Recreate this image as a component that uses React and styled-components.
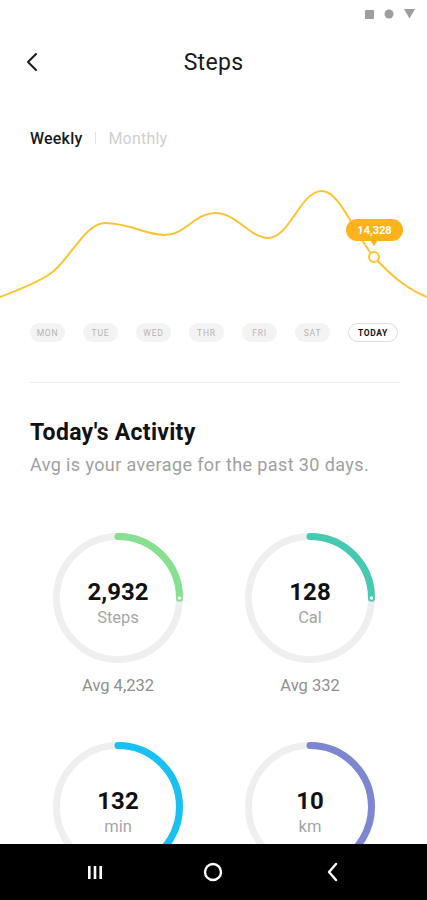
import React from 'react'
import styled, { createGlobalStyle } from 'styled-components'

const GlobalStyle = createGlobalStyle`
  * { box-sizing: border-box; }
  body {
    margin: 0;
    background: #fff;
    font-family: Roboto, 'Noto Sans', sans-serif;
  }
`

const Screen = styled.div`
  position: relative;
  width: 427px;
  height: 900px;
  overflow: hidden;
  background: #fff;
`

const StatusBar = styled.div`
  height: 28px;
  display: flex;
  justify-content: flex-end;
  align-items: center;
  gap: 10px;
  padding-right: 12px;
`

const Header = styled.div`
  height: 68px;
  display: grid;
  grid-template-columns: 60px 1fr 60px;
  align-items: center;
`

const BackButton = styled.div`
  padding-left: 26px;
  display: flex;
  align-items: center;
`

const Title = styled.h1`
  margin: 0;
  text-align: center;
  font-size: 23px;
  font-weight: 400;
  color: #1a1a1a;
  letter-spacing: 0.3px;
`

const Tabs = styled.div`
  margin-top: 32px;
  padding-left: 30px;
  display: flex;
  align-items: center;
  height: 20px;
  font-size: 16px;
`

const Tab = styled.span`
  color: ${p => (p.$active ? '#1a1a1a' : '#cfcfcf')};
  font-weight: ${p => (p.$active ? 500 : 400)};
  letter-spacing: 0.2px;
`

const TabDivider = styled.span`
  width: 1px;
  height: 12px;
  background: #e4e4e4;
  margin: 0 12px 0 13px;
`

const ChartArea = styled.div`
  position: relative;
  margin-top: 12px;
  height: 150px;
`

const Tooltip = styled.div`
  position: absolute;
  left: 346px;
  top: 59px;
  width: 57px;
  height: 22px;
  border-radius: 11px;
  background: #ffb21c;
  color: #fff;
  font-size: 11px;
  font-weight: 700;
  display: flex;
  align-items: center;
  justify-content: center;

  &::after {
    content: '';
    position: absolute;
    left: 24px;
    bottom: -5px;
    border-left: 4px solid transparent;
    border-right: 4px solid transparent;
    border-top: 6px solid #ffb21c;
  }
`

const Days = styled.div`
  margin-top: 13px;
  padding-left: 30px;
  display: flex;
  gap: 18px;
`

const Day = styled.div`
  width: ${p => (p.$today ? '50px' : '35px')};
  height: 19px;
  border-radius: 10px;
  background: ${p => (p.$today ? '#fff' : '#f3f3f3')};
  border: ${p => (p.$today ? '1px solid #dcdcdc' : 'none')};
  color: ${p => (p.$today ? '#111' : '#b3b3b3')};
  font-size: 8.5px;
  font-weight: ${p => (p.$today ? 700 : 400)};
  letter-spacing: ${p => (p.$today ? '0.6px' : '0.8px')};
  display: flex;
  align-items: center;
  justify-content: center;
`

const Divider = styled.div`
  margin: 40px 27px 0 30px;
  height: 1px;
  background: #ececec;
`

const SectionTitle = styled.h2`
  margin: 36px 0 0 30px;
  font-size: 23px;
  line-height: 28px;
  font-weight: 700;
  color: #111;
  letter-spacing: 0.3px;
`

const SectionNote = styled.p`
  margin: 8px 0 0 30px;
  font-size: 18px;
  line-height: 20px;
  color: #a0a0a0;
  letter-spacing: 0.4px;
  white-space: nowrap;
`

const RingGrid = styled.div`
  margin-top: 58px;
  padding-left: 22px;
  display: grid;
  grid-template-columns: 192px 192px;
  row-gap: 46px;
`

const RingCell = styled.div`
  display: flex;
  flex-direction: column;
  align-items: center;
`

const RingBox = styled.div`
  display: grid;
  width: 130px;
  height: 130px;

  & > * {
    grid-area: 1 / 1;
  }
`

const RingText = styled.div`
  display: flex;
  flex-direction: column;
  align-items: center;
  justify-content: center;
  padding-top: 11px;
`

const RingValue = styled.div`
  font-size: 24px;
  line-height: 28px;
  font-weight: 700;
  color: #111;
`

const RingLabel = styled.div`
  font-size: 16.5px;
  line-height: 24px;
  color: #a6a6a6;
`

const RingAvg = styled.div`
  margin-top: 13px;
  font-size: 16.5px;
  line-height: 20px;
  color: #8f8f8f;
`

const NavBar = styled.div`
  position: absolute;
  left: 0;
  right: 0;
  bottom: 0;
  height: 56px;
  background: #000;
  display: grid;
  grid-template-columns: 1fr 1fr 1fr;
  align-items: center;
  justify-items: center;
  padding: 0 36px;
`

const CHART_PATH =
  'M0 137 C20 129 35 124 50 114 C70 100 85 63 105 63 C130 63 145 75 165 75 C185 75 195 53 215 53 C237 53 250 78 268 78 C290 78 300 31 322 31 C340 31 355 75 374 97 C395 120 410 130 427 137'

const days = ['MON', 'TUE', 'WED', 'THR', 'FRI', 'SAT']

const rings = [
  { value: '2,932', label: 'Steps', avg: 'Avg 4,232', color: '#86e08f', pct: 0.25, dot: true },
  { value: '128', label: 'Cal', avg: 'Avg 332', color: '#45c9b1', pct: 0.25, dot: true },
  { value: '132', label: 'min', avg: '', color: '#18c1f2', pct: 0.42 },
  { value: '10', label: 'km', avg: '', color: '#7c86d1', pct: 0.42 },
]

const Ring = ({ color, pct, dot }) => {
  const r = 61.5
  const c = 2 * Math.PI * r
  const angle = -Math.PI / 2 + pct * 2 * Math.PI
  const dx = 65 + r * Math.cos(angle)
  const dy = 65 + r * Math.sin(angle)
  return (
    <svg width="130" height="130" viewBox="0 0 130 130">
      <circle cx="65" cy="65" r={r} fill="none" stroke="#efefef" strokeWidth="7" />
      <circle
        cx="65"
        cy="65"
        r={r}
        fill="none"
        stroke={color}
        strokeWidth="7"
        strokeLinecap="round"
        strokeDasharray={`${c * pct} ${c}`}
        transform="rotate(-90 65 65)"
      />
      {dot && <circle cx={dx} cy={dy} r="1.8" fill="#fff" />}
    </svg>
  )
}

export default function App() {
  return (
    <Screen>
      <GlobalStyle />
      <StatusBar>
        <svg width="9" height="9" viewBox="0 0 9 9"><rect width="9" height="9" rx="1" fill="#9e9e9e" /></svg>
        <svg width="10" height="10" viewBox="0 0 10 10"><circle cx="5" cy="5" r="4.5" fill="#9e9e9e" /></svg>
        <svg width="11" height="10" viewBox="0 0 11 10"><path d="M0 0 H11 L5.5 9.5 Z" fill="#9e9e9e" /></svg>
      </StatusBar>

      <Header>
        <BackButton>
          <svg width="12" height="20" viewBox="0 0 12 20">
            <polyline points="10,2 2,10 10,18" fill="none" stroke="#1a1a1a" strokeWidth="2" strokeLinecap="round" strokeLinejoin="round" />
          </svg>
        </BackButton>
        <Title>Steps</Title>
        <span />
      </Header>

      <Tabs>
        <Tab $active>Weekly</Tab>
        <TabDivider />
        <Tab>Monthly</Tab>
      </Tabs>

      <ChartArea>
        <svg width="427" height="150" viewBox="0 0 427 150">
          <path d={CHART_PATH} fill="none" stroke="#fbc531" strokeWidth="2" />
          <circle cx="374" cy="97" r="5" fill="#fff" stroke="#fbc531" strokeWidth="2" />
        </svg>
        <Tooltip>14,328</Tooltip>
      </ChartArea>

      <Days>
        {days.map(d => <Day key={d}>{d}</Day>)}
        <Day $today>TODAY</Day>
      </Days>

      <Divider />

      <SectionTitle>Today's Activity</SectionTitle>
      <SectionNote>Avg is your average for the past 30 days.</SectionNote>

      <RingGrid>
        {rings.map(r => (
          <RingCell key={r.label}>
            <RingBox>
              <Ring color={r.color} pct={r.pct} dot={r.dot} />
              <RingText>
                <RingValue>{r.value}</RingValue>
                <RingLabel>{r.label}</RingLabel>
              </RingText>
            </RingBox>
            {r.avg && <RingAvg>{r.avg}</RingAvg>}
          </RingCell>
        ))}
      </RingGrid>

      <NavBar>
        <svg width="14" height="13" viewBox="0 0 14 13">
          <rect x="0" y="0" width="2.6" height="13" fill="#fff" />
          <rect x="5.7" y="0" width="2.6" height="13" fill="#fff" />
          <rect x="11.4" y="0" width="2.6" height="13" fill="#fff" />
        </svg>
        <svg width="20" height="20" viewBox="0 0 20 20">
          <circle cx="10" cy="10" r="8" fill="none" stroke="#fff" strokeWidth="2.4" />
        </svg>
        <svg width="12" height="20" viewBox="0 0 12 20">
          <polyline points="10,2 3,10 10,18" fill="none" stroke="#fff" strokeWidth="2.4" strokeLinecap="round" strokeLinejoin="round" />
        </svg>
      </NavBar>
    </Screen>
  )
}
